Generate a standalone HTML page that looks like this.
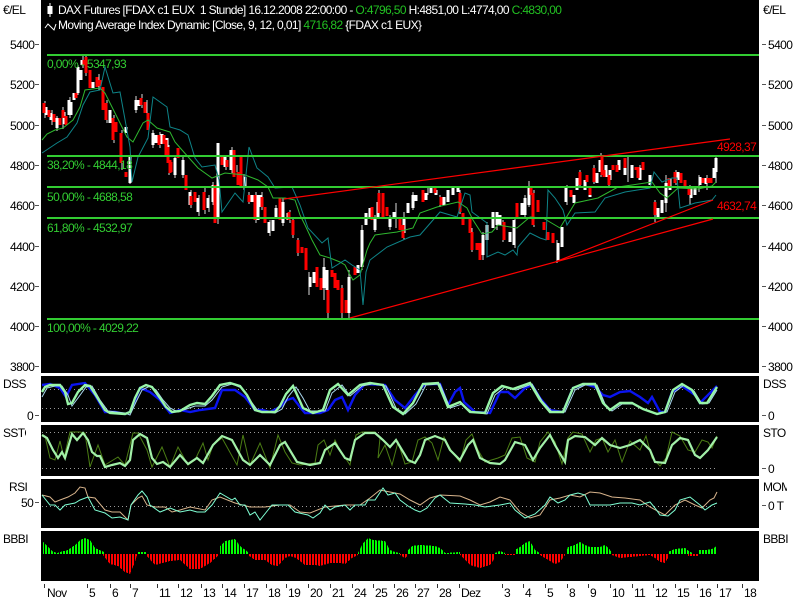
<!DOCTYPE html>
<html><head><meta charset="utf-8"><title>DAX Futures</title>
<style>
html,body{margin:0;padding:0;background:#fff;width:800px;height:600px;overflow:hidden}
svg{display:block}
text{font-family:"Liberation Sans",sans-serif;font-size:12px;letter-spacing:-.6px}
text.h{letter-spacing:0}
</style></head><body>
<svg width="800" height="600" viewBox="0 0 800 600" xmlns="http://www.w3.org/2000/svg">
<defs>
<pattern id="pg" width="3" height="10" patternUnits="userSpaceOnUse"><rect width="2" height="10" fill="#00ff00"/></pattern>
<pattern id="pr" width="3" height="10" patternUnits="userSpaceOnUse"><rect width="2" height="10" fill="#ff0000"/></pattern>
<clipPath id="cl"><rect x="0" y="425" width="26" height="16"/></clipPath>
<clipPath id="cr"><rect x="760" y="478" width="27" height="16"/></clipPath>
</defs>
<rect width="800" height="600" fill="#fff"/>
<rect x="41" y="0" width="718" height="373" fill="#000"/>
<rect x="41" y="376" width="718" height="46" fill="#000"/>
<rect x="41" y="425" width="718" height="51" fill="#000"/>
<rect x="41" y="479" width="718" height="49" fill="#000"/>
<rect x="41" y="531" width="718" height="50" fill="#000"/>

<!-- wicks -->
<path fill="none" stroke="#ddd" stroke-width="1" shape-rendering="crispEdges" d="M45 101V118M52 110V125M57 116V131M63 107V129M70 97V118M78 65V95M83 56V68M86 55V76M99 74V90M107 100V123M114 115V143M122 130V170M130 157V184M136 96V113M142 94V108M147 100V116M153 130V148M160 132V148M169 145V175M175 155V178M183 157V178M191 190V208M199 195V216M205 188V214M209 195V212M213 182V205M218 143V224M226 155V170M232 147V173M237 165V182M244 174V190M249 192V204M256 192V223M262 192V210M270 220V236M276 205V218M283 198V226M290 210V223M293 218V238M298 238V256M309 272V295M324 258V300M328 285V318M342 285V318M349 270V318M362 225V270M375 215V232M379 190V215M390 215V230M396 203V228M404 212V240M413 192V210M428 187V195M440 195V207M460 190V214M472 228V252M483 232V260M487 222V242M497 212V230M503 220V242M515 218V248M525 195V217M529 181V207M534 190V227M557 240V263M567 185V205M580 170V187M594 165V184M601 153V177M609 172V188M628 155V182M640 165V180M655 200V222M666 175V212M676 170V185M690 185V205M699 175V192M707 175V190M716 155V183"/>
<!-- white candles -->
<path fill="none" stroke="#fff" stroke-width="3" shape-rendering="crispEdges" d="M46 107V115M51 113V120M57 118V128M64 112V124M69 100V115M71 102V115M74 93V100M78 67V93M81 70V80M82 60V65M93 82V88M110 110V123M126 127V133M130 157V183M136 100V110M139 100V106M153 133V145M156 135V143M162 134V144M167 138V148M175 158V175M183 160V175M190 192V205M198 198V212M208 198V208M213 185V202M218 143V218M225 157V167M231 150V170M245 177V187M252 195V202M258 195V220M261 195V207M269 222V233M273 220V231M276 208V217M283 202V223M288 213V220M310 277V287M314 272V283M324 267V288M327 270V290M349 277V313M358 265V273M362 230V267M366 213V225M370 208V218M375 218V230M378 202V217M390 217V227M394 212V219M404 217V233M408 203V213M413 195V208M416 195V201M426 193V200M431 188V193M436 190V195M444 197V205M448 190V202M453 188V195M458 188V192M483 235V255M487 225V240M493 212V228M497 212V225M500 215V225M510 232V242M514 220V245M522 203V215M525 198V215M529 187V205M538 203V212M558 243V260M562 227V247M566 188V202M574 195V203M577 178V190M585 180V190M590 188V197M597 173V183M600 160V172M606 165V177M610 170V180M619 160V170M625 165V175M632 165V178M640 168V180M650 175V185M658 208V218M662 200V213M666 183V203M670 178V190M678 172V180M691 188V198M695 187V195M700 177V185M706 178V184M714 168V178M716 158V172"/>
<!-- red candles -->
<path fill="none" stroke="#f00" stroke-width="3" shape-rendering="crispEdges" d="M44 103V113M49 110V117M54 114V122M60 118V125M63 110V118M66 116V125M76 93V98M84 60V65M86 57V73M90 70V88M97 77V87M100 80V86M103 87V110M106 103V120M113 118V140M116 122V132M121 133V163M126 172V177M141 98V105M145 102V113M148 113V130M159 135V145M164 135V144M168 147V163M170 160V173M166 140V155M171 162V172M178 148V158M186 175V190M191 196V205M195 192V202M204 192V210M215 185V223M222 157V165M227 160V167M234 150V177M238 172V185M241 157V187M249 195V202M255 195V220M262 197V207M265 207V223M280 198V220M289 212V220M293 220V235M298 240V253M302 247V253M306 248V270M317 267V287M321 278V290M328 290V313M332 270V277M335 273V288M338 280V290M342 288V313M346 300V313M355 267V275M372 207V220M379 193V213M383 193V217M387 207V216M400 218V230M403 225V238M423 190V202M435 188V193M441 197V205M460 193V212M463 213V225M470 218V233M472 232V250M477 243V250M480 243V260M504 222V240M517 203V218M531 188V195M533 193V225M538 200V212M544 222V230M548 232V240M553 233V243M571 190V197M580 172V185M587 175V182M590 187V195M594 168V182M602 157V175M604 170V177M609 175V185M613 165V170M617 165V172M625 158V168M636 167V170M638 167V178M643 162V170M655 202V215M669 178V186M675 172V183M681 173V183M685 180V187M689 188V195M703 178V183M708 178V183M711 178V183"/>

<!-- moving averages -->
<polyline fill="none" stroke="#2fb82f" stroke-width="1" points="42,140 47,134 55,130 63,128 73,120 80,107 85,90 100,88 105,93 115,113 127,137 133,142 143,123 148,120 157,128 170,132 175,142 182,150 198,168 212,178 225,173 245,175 258,180 268,187 273,198 285,198 295,200 300,215 305,225 312,240 320,255 330,258 340,262 345,265 350,275 353,280 360,275 367,250 370,243 375,235 397,232 413,228 420,213 437,207 458,202 467,208 473,220 482,234 492,232 498,225 517,228 530,217 543,218 560,228 575,203 598,198 618,187 632,185 652,182 660,193 667,198 678,188 698,189 712,186 716,182"/>
<polyline fill="none" stroke="#0e8488" stroke-width="1" points="42,153 57,143 67,137 77,123 83,105 90,92 100,90 105,67 113,93 120,92 130,147 132,182 138,157 148,138 153,97 167,107 170,127 180,130 188,135 195,158 202,167 215,165 219,180 222,212 235,193 243,202 249,147 257,168 268,177 275,188 292,187 300,205 308,228 322,243 328,238 332,268 345,260 352,265 360,270 363,305 366,272 370,260 387,247 410,237 420,235 440,212 457,217 465,193 470,195 472,212 487,223 487,257 498,252 505,255 513,250 517,255 518,247 530,233 540,238 546,240 548,190 555,198 563,210 567,225 575,213 595,212 605,198 625,192 650,188 654,172 662,182 672,178 677,178 680,208 695,203 712,200 716,195"/>

<!-- fib lines -->
<path stroke="#32cd32" stroke-width="2" fill="none" shape-rendering="crispEdges" d="M47 55H759M47 156H759M47 187H759M47 218H759M47 319H759"/>
<!-- trend lines -->
<path stroke="#f00" stroke-width="1.2" fill="none" d="M284 199L730 139M350 318L713 219M555 262L713 200"/>

<!-- chart labels -->
<g fill="#32cd32">
<text x="47" y="68">0,00% - 5347,93</text>
<text x="47" y="169">38,20% - 4844,18</text>
<text x="47" y="201">50,00% - 4688,58</text>
<text x="47" y="232">61,80% - 4532,97</text>
<text x="47" y="332">100,00% - 4029,22</text>
</g>
<text x="717" y="151" fill="#f00">4928,37</text>
<text x="717" y="210" fill="#f00">4632,74</text>

<!-- header -->
<path d="M50 3V17" stroke="#fff" fill="none"/><rect x="47.5" y="6" width="5" height="8" fill="#fff"/>
<polyline points="45,28 48,24 51,27 54,30 56,24" fill="none" stroke="#fff"/>
<text class="h" x="58" y="14" fill="#fff" textLength="504" lengthAdjust="spacing">DAX Futures [FDAX c1 EUX&#160; 1 Stunde] 16.12.2008 22:00:00 - <tspan fill="#22c022">O:4796,50</tspan> H:4851,00 L:4774,00 <tspan fill="#22c022">C:4830,00</tspan></text>
<text class="h" x="58" y="29" fill="#fff" textLength="364" lengthAdjust="spacing">Moving Average Index Dynamic [Close, 9, 12, 0,01] <tspan fill="#22c022">4716,82</tspan> {FDAX c1 EUX}</text>

<!-- axes -->
<g fill="#000">
<text x="3" y="14">€/EL</text><text x="763" y="14">€/EL</text>
<text x="10" y="49">5400</text><text x="10" y="89">5200</text><text x="10" y="130">5000</text><text x="10" y="170">4800</text><text x="10" y="210">4600</text><text x="10" y="251">4400</text><text x="10" y="291">4200</text><text x="10" y="331">4000</text><text x="10" y="371">3800</text>
<text x="768" y="49">5400</text><text x="768" y="89">5200</text><text x="768" y="130">5000</text><text x="768" y="170">4800</text><text x="768" y="210">4600</text><text x="768" y="251">4400</text><text x="768" y="291">4200</text><text x="768" y="331">4000</text><text x="768" y="371">3800</text>
<text x="3" y="388">DSS</text><text x="27" y="420">0</text>
<text x="3" y="437" clip-path="url(#cl)">SSTO</text>
<text x="9" y="491">RSI</text><text x="21" y="507">50</text>
<text x="3" y="543">BBBI</text>
<text x="763" y="388">DSS</text><text x="768" y="420">0</text>
<text x="763" y="437">STO</text><text x="768" y="473">0</text>
<text x="763" y="491" clip-path="url(#cr)">MOM</text><text x="768" y="510">0 T</text>
<text x="763" y="543">BBBI</text>
</g>
<path stroke="#555" fill="none" shape-rendering="crispEdges" d="M35 44.5H39M35 84.5H39M35 125.5H39M35 165.5H39M35 205.5H39M35 246.5H39M35 286.5H39M35 326.5H39M35 366.5H39M762 44.5H766M762 84.5H766M762 125.5H766M762 165.5H766M762 205.5H766M762 246.5H766M762 286.5H766M762 326.5H766M762 366.5H766M35 415.5H39M35 502.5H39M762 415.5H766M762 468.5H766M762 505.5H766"/>

<!-- dotted guides -->
<path stroke="#999" stroke-width="1" stroke-dasharray="1 3" fill="none" shape-rendering="crispEdges" d="M42 389.5H718M42 408.5H718M42 432.5H718M42 468.5H718M42 506.5H718"/>

<!-- DSS -->
<polyline fill="none" stroke="#0a14f0" stroke-width="2.4" points="42,385 50,384 60,388 66,397 72,385 85,383 95,395 105,412 115,412 125,414 130,412 140,388 150,392 160,400 170,413 180,410 190,412 200,410 215,408 222,390 235,390 245,397 255,410 262,410 270,412 280,407 287,400 293,398 300,407 305,413 320,413 328,410 335,400 342,397 348,410 355,395 365,384 385,385 395,400 405,408 415,395 425,384 440,384 448,405 455,392 460,388 464,402 475,412 490,413 500,392 508,392 515,398 525,388 532,385 540,398 550,410 563,412 573,388 585,384 595,387 603,395 610,397 620,392 630,391 640,397 648,403 652,397 660,412 665,412 672,392 682,386 695,395 700,403 710,393 717,386"/>
<polyline fill="none" stroke="#a9d8f0" stroke-width="1" points="42,397 47,388 55,386 62,386 68,395 72,406 78,398 86,387 92,386 100,400 108,411 125,413 130,415 136,402 142,390 150,386 156,390 163,400 170,408 178,412 195,406 205,406 212,400 222,387 232,384 242,388 250,400 258,411 275,413 282,409 288,397 296,387 303,398 310,411 325,411 332,393 342,385 350,396 362,386 372,384 386,386 396,408 405,414 416,404 426,385 440,384 450,408 462,404 472,412 487,414 495,395 505,387 516,390 532,384 542,401 552,412 565,412 575,390 585,385 597,385 605,404 612,411 622,404 634,404 645,410 659,414 667,412 675,392 684,385 694,391 702,404 709,403 717,390"/>
<polyline fill="none" stroke="#98f5a8" stroke-width="2.4" points="42,392 45,387 50,385 60,385 65,392 68,404 72,403 78,392 85,385 90,386 97,397 105,410 110,413 125,414 130,412 135,398 140,388 146,385 152,387 160,398 166,407 172,412 180,411 190,405 197,403 205,404 212,396 220,385 230,383 240,386 247,395 255,410 262,412 275,412 280,406 286,394 293,386 303,408 313,413 323,410 330,390 338,384 348,395 360,385 370,383 383,385 393,407 403,414 413,403 423,384 438,383 448,407 460,402 470,412 485,413 493,393 502,386 513,389 530,383 540,400 550,412 563,412 573,388 583,384 595,384 603,403 610,410 620,403 632,403 643,409 657,414 665,412 673,390 682,384 692,390 700,403 707,403 717,387"/>

<!-- SST -->
<polyline fill="none" stroke="#4b7d14" stroke-width="1" points="42,435 45,436 50,458 55,460 60,441 64,458 70,432 80,432 85,433 90,467 98,445 105,465 118,457 125,465 133,433 138,433 147,450 152,467 162,447 170,467 178,447 188,465 195,460 203,443 208,460 213,445 222,438 237,465 243,435 250,465 260,443 270,468 278,435 285,452 292,463 300,465 315,463 318,445 324,440 330,455 335,440 340,450 350,465 356,435 362,432 375,432 380,438 378,458 385,445 392,465 398,442 405,464 412,462 418,440 425,437 432,443 438,460 444,437 452,452 460,462 466,440 472,434 478,450 485,462 498,458 505,455 512,438 520,437 527,458 535,462 540,442 548,432 555,442 562,464 568,438 573,432 582,434 590,452 596,440 602,438 608,452 615,440 622,462 630,441 640,450 646,436 652,458 660,466 666,458 672,432 680,436 688,450 695,452 702,440 708,442 712,448 717,436"/>
<polyline fill="none" stroke="#a2f0a8" stroke-width="2.2" points="42,435 47,438 53,450 58,458 62,452 65,458 72,434 77,440 83,433 88,440 92,452 97,456 100,456 105,467 112,465 120,463 125,466 130,460 133,440 140,434 147,438 152,458 157,464 163,462 170,467 180,455 188,464 197,458 203,463 213,445 222,436 232,440 243,460 250,465 260,455 270,465 280,445 285,442 297,462 310,465 320,463 325,450 335,443 345,458 350,460 355,440 365,433 375,433 383,440 390,447 396,440 408,460 415,463 420,455 425,440 435,436 445,440 450,450 460,460 468,445 473,440 480,458 490,463 500,464 505,460 515,442 525,445 533,460 540,448 550,435 555,445 565,462 568,440 575,436 585,437 595,445 602,438 610,445 620,448 630,445 640,440 650,450 655,462 665,463 672,445 680,438 688,440 695,455 700,458 708,450 717,437"/>

<!-- RSI -->
<polyline fill="none" stroke="#d8b48c" stroke-width="1" points="42,495 50,497 55,502 60,500 68,497 75,493 80,487 85,488 88,497 95,498 105,510 112,512 120,512 128,520 131,505 138,498 142,496 147,505 155,507 165,507 172,512 180,510 190,507 205,510 212,500 220,497 235,503 250,507 265,507 280,505 290,505 300,512 310,513 325,507 345,505 360,505 370,498 380,490 390,492 400,494 410,500 420,505 430,498 440,495 460,496 470,500 480,505 490,502 500,497 510,500 520,512 530,518 540,515 550,500 560,498 570,495 580,497 590,492 600,493 612,497 625,498 640,500 650,507 665,515 675,505 685,500 695,505 702,508 710,500 714,498 717,492"/>
<polyline fill="none" stroke="#7fffd4" stroke-width="1" points="42,495 50,505 55,505 60,510 65,505 75,503 80,500 88,497 95,510 105,513 112,518 120,517 128,520 131,505 138,495 142,491 147,497 150,505 160,512 170,508 180,512 190,510 197,512 205,512 212,505 220,493 232,500 235,498 240,505 245,505 250,515 255,512 260,520 268,510 272,505 288,505 295,512 308,515 313,518 320,513 325,505 330,510 335,507 345,505 350,510 355,505 365,505 368,500 375,500 383,488 388,495 395,493 400,500 408,506 415,510 420,512 427,508 435,498 440,495 450,503 465,504 475,505 485,507 500,505 510,503 515,510 525,518 535,514 545,505 550,497 558,503 565,500 570,495 578,493 585,495 590,505 600,505 610,505 620,503 632,503 640,505 650,502 655,508 660,515 668,516 675,510 680,500 690,497 700,505 705,510 712,505 717,503"/>

<!-- BBBI -->
<g shape-rendering="crispEdges">
<path fill="url(#pg)" d="M43 554V542L47 546 52 551 57 553 60 552 68 550 75 545 80 540 85 538 90 540 95 548 104 552V554ZM138 554V552H146V554ZM220 554V546L225 541 235 539 240 546 248 552V554ZM358 554V553L363 543 368 538 373 540 385 541 390 550 395 552 400 553V554ZM408 554V550L412 546 420 545 435 546 440 548 445 553 460 552V554ZM495 554V553L500 551 505 553V554ZM515 554V550L520 547 525 543 530 541 535 550 540 553V554ZM566 554V552L568 547 575 545 580 542 585 545 590 547 600 547 605 545 610 550 612 553V554ZM668 554V552L675 549 685 548 690 552 693 553V554ZM698 554V550L705 550 712 549 717 546V554Z"/>
<path fill="url(#pr)" d="M103 554V555L110 564 118 566 125 572 130 574 135 562 137 555V554ZM146 554V555L155 565 170 561 180 560 190 569 200 569 210 563 219 555V554ZM248 554V555L255 560 265 560 272 565 278 566 285 558 290 556 296 558 305 565 315 565 320 566 330 563 340 563 345 564 352 558 358 555V554ZM400 554V555L405 558 408 555V554ZM460 554V555L470 565 480 568 490 565 495 558 495 554ZM505 554V555H515V554ZM540 554V555L550 561 555 564 560 562 565 555V554ZM612 554V555L620 558 640 556 650 555 655 558 660 562 665 563 668 558V554ZM688 554V556H698V554Z"/>
</g>

<!-- bottom axis -->
<path stroke="#333" fill="none" shape-rendering="crispEdges" d="M44.5 584V588M87.5 584V588M110.5 584V588M130.5 584V588M157.5 584V588M178.5 584V588M201.5 584V588M222.5 584V588M244.5 584V588M266.5 584V588M286.5 584V588M308.5 584V588M330.5 584V588M352.5 584V588M373.5 584V588M394.5 584V588M415.5 584V588M437.5 584V588M459.5 584V588M502.5 584V588M523.5 584V588M545.5 584V588M567.5 584V588M588.5 584V588M610.5 584V588M632.5 584V588M653.5 584V588M675.5 584V588M697.5 584V588M717.5 584V588M742.5 584V588"/>
<g fill="#000">
<text x="47" y="597">Nov</text><text x="89" y="597">5</text><text x="112" y="597">6</text><text x="132" y="597">7</text><text x="159" y="597">11</text><text x="180" y="597">12</text><text x="203" y="597">13</text><text x="224" y="597">14</text><text x="246" y="597">17</text><text x="268" y="597">18</text><text x="288" y="597">19</text><text x="310" y="597">20</text><text x="332" y="597">21</text><text x="354" y="597">24</text><text x="375" y="597">25</text><text x="396" y="597">26</text><text x="417" y="597">27</text><text x="439" y="597">28</text><text x="461" y="597">Dez</text><text x="504" y="597">3</text><text x="525" y="597">4</text><text x="547" y="597">5</text><text x="569" y="597">8</text><text x="590" y="597">9</text><text x="612" y="597">10</text><text x="634" y="597">11</text><text x="655" y="597">12</text><text x="677" y="597">15</text><text x="699" y="597">16</text><text x="719" y="597">17</text><text x="744" y="597">18</text>
</g>
</svg>
</body></html>
